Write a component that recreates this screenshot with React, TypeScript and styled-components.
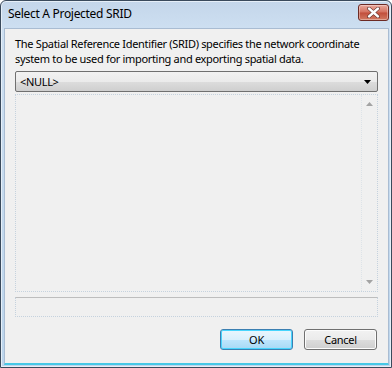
import styled, { createGlobalStyle } from "styled-components";

const Global = createGlobalStyle`
  html, body {
    margin: 0;
    padding: 0;
    background: #ffffff;
  }
  body {
    font-family: "Noto Sans", "Open Sans", sans-serif;
    font-size: 11px;
    letter-spacing: -0.32px;
    color: #000;
  }
`;

const Window = styled.div({
  width: "392px",
  height: "368px",
  boxSizing: "border-box",
  border: "1px solid #3a4a5c",
  borderRadius: "6px 6px 0 0",
  background: "linear-gradient(#c4d6ea, #cddff1 28px, #bcd5ec)",
  padding: "0 2px 2px 3px",
  display: "flex",
  flexDirection: "column",
  boxShadow: "inset 0 0 0 1px #e6eff8",
  overflow: "hidden",
});

const TitleBar = styled.div({
  height: "27px",
  flexShrink: 0,
  display: "flex",
  alignItems: "flex-start",
  justifyContent: "space-between",
  paddingLeft: "4px",
});

const Title = styled.span({
  fontSize: "12px",
  letterSpacing: "-0.3px",
  lineHeight: "14px",
  marginTop: "6px",
  color: "#000",
});

const CloseButton = styled.div({
  width: "31px",
  height: "17px",
  boxSizing: "border-box",
  marginTop: "3px",
  border: "1px solid #6c2a24",
  borderRadius: "3px",
  background: "linear-gradient(#e9a89c, #d4715f 48%, #c14e3b 52%, #d27a62)",
  boxShadow: "inset 0 0 0 1px rgba(255,255,255,0.35)",
  display: "flex",
  alignItems: "center",
  justifyContent: "center",
});

const Client = styled.div({
  flex: 1,
  background: "#f0f0f0",
  borderTop: "1px solid #a9bcd2",
  borderLeft: "1px solid #a9bcd2",
  borderRight: "1px solid #a9bcd2",
  borderBottom: "2px solid #46c8e6",
  padding: "7px 10px 10px 10px",
  display: "flex",
  flexDirection: "column",
});

const Description = styled.p({
  margin: 0,
  lineHeight: "15px",
  whiteSpace: "nowrap",
});

const Combo = styled.div({
  marginTop: "5px",
  height: "19px",
  border: "1px solid #707070",
  borderRadius: "2px",
  background: "linear-gradient(#f2f2f2, #ebebeb 50%, #dddddd 51%, #cfcfcf)",
  display: "flex",
  alignItems: "center",
  justifyContent: "space-between",
  padding: "0 6px 0 4px",
});

const ListBox = styled.div({
  marginTop: "2px",
  height: "196px",
  border: "1px dotted #c5d2de",
  display: "flex",
  justifyContent: "flex-end",
});

const ScrollTrack = styled.div({
  width: "15px",
  borderLeft: "1px dotted #dde3e8",
  display: "flex",
  flexDirection: "column",
  justifyContent: "space-between",
  alignItems: "center",
  padding: "7px 0",
});

const StatusBox = styled.div({
  marginTop: "5px",
  height: "18px",
  border: "1px dotted #c5d2de",
  borderTop: "1px solid #bdbdbd",
});

const ButtonRow = styled.div({
  marginTop: "12px",
  display: "flex",
  justifyContent: "flex-end",
  gap: "11px",
  paddingRight: "1px",
});

const Button = styled.div<{ $primary?: boolean }>`
  width: 71px;
  height: 19px;
  box-sizing: content-box;
  border: 1px solid ${(p) => (p.$primary ? "#3c7fb1" : "#707070")};
  border-radius: 3px;
  background: ${(p) =>
    p.$primary
      ? "linear-gradient(#eaf6fd, #d9f0fc 50%, #bee6fd 51%, #a7d9f5)"
      : "linear-gradient(#f2f2f2, #ebebeb 50%, #dddddd 51%, #cfcfcf)"};
  box-shadow: inset 0 0 0 1px ${(p) => (p.$primary ? "#48d5fd" : "#fcfcfc")};
  display: flex;
  align-items: center;
  justify-content: center;
`;

export default function App() {
  return (
    <>
      <Global />
      <Window>
        <TitleBar>
          <Title>Select A Projected SRID</Title>
          <CloseButton>
            <svg width="13" height="11" viewBox="0 0 13 11">
              <path
                d="M2 1.5 L11 9.5 M11 1.5 L2 9.5"
                stroke="#4a1e1a"
                strokeWidth="3.6"
                strokeLinecap="round"
              />
              <path
                d="M2 1.5 L11 9.5 M11 1.5 L2 9.5"
                stroke="#ffffff"
                strokeWidth="2.4"
                strokeLinecap="round"
              />
            </svg>
          </CloseButton>
        </TitleBar>
        <Client>
          <Description>
            The Spatial Reference Identifier (SRID) specifies the network coordinate
            <br />
            system to be used for importing and exporting spatial data.
          </Description>
          <Combo>
            <span>&lt;NULL&gt;</span>
            <svg width="7" height="4" viewBox="0 0 7 4">
              <path d="M0 0 H7 L3.5 4 Z" fill="#000" />
            </svg>
          </Combo>
          <ListBox>
            <ScrollTrack>
              <svg width="7" height="4" viewBox="0 0 7 4">
                <path d="M0 4 H7 L3.5 0 Z" fill="#a3a3a3" />
              </svg>
              <svg width="7" height="4" viewBox="0 0 7 4">
                <path d="M0 0 H7 L3.5 4 Z" fill="#a3a3a3" />
              </svg>
            </ScrollTrack>
          </ListBox>
          <StatusBox />
          <ButtonRow>
            <Button $primary>OK</Button>
            <Button>Cancel</Button>
          </ButtonRow>
        </Client>
      </Window>
    </>
  );
}
